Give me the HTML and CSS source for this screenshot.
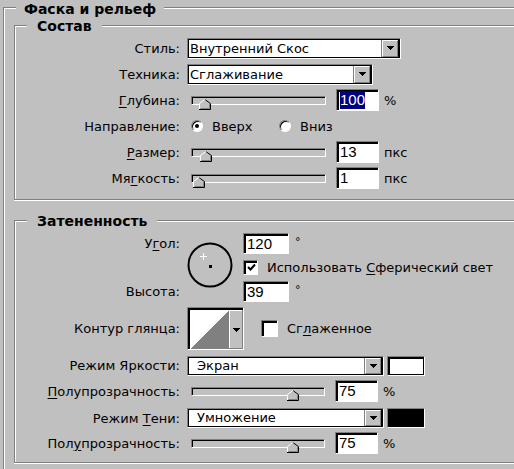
FILE: index.html
```html
<!DOCTYPE html>
<html lang="ru">
<head>
<meta charset="utf-8">
<title>Фаска и рельеф</title>
<link rel="stylesheet" href="styles.css">
</head>
<body>
<div class="outer">
  <div class="legend legend-outer">Фаска и рельеф</div>

  <div class="group group-sostav">
    <div class="legend">Состав</div>
    <div class="grid grid-sostav">
      <div class="lbl">Стиль:</div>
      <div class="ctl">
        <div class="combo w-style"><div class="combo-in"><span class="combo-text">Внутренний Скос</span><span class="combo-btn"><svg width="7" height="4" viewBox="0 0 7 4"><path d="M0 0h7v1h-1v1h-1v1h-1v1h-1v-1h-1v-1h-1v-1h-1z" fill="#000"/></svg></span></div></div>
      </div>

      <div class="lbl">Техника:</div>
      <div class="ctl">
        <div class="combo w-tech"><div class="combo-in"><span class="combo-text">Сглаживание</span><span class="combo-btn"><svg width="7" height="4" viewBox="0 0 7 4"><path d="M0 0h7v1h-1v1h-1v1h-1v1h-1v-1h-1v-1h-1v-1h-1z" fill="#000"/></svg></span></div></div>
      </div>

      <div class="lbl"><u>Г</u>лубина:</div>
      <div class="ctl">
        <div class="slider"><svg class="thumb" style="left:7px" width="12" height="11" viewBox="0 0 12 11"><path d="M0.5 10.5V4.5L6 0.5L11.5 4.5V10.5Z" fill="#c0c0c0"/><path d="M0.5 10V4.5L5.5 0.8" stroke="#fff" fill="none"/><path d="M6.3 0.8L11.5 4.6V10.5H0" stroke="#000" fill="none"/><path d="M10.5 5.2V9.5H1.5" stroke="#808080" fill="none"/></svg></div>
        <div class="edit"><span class="sel">100</span></div>
        <span class="unit">%</span>
      </div>

      <div class="lbl">Направление:</div>
      <div class="ctl">
        <div class="radio-item first"><span class="radio on"></span><span>Вверх</span></div>
        <div class="radio-item"><span class="radio"></span><span>Вниз</span></div>
      </div>

      <div class="lbl"><u>Р</u>азмер:</div>
      <div class="ctl">
        <div class="slider"><svg class="thumb" style="left:8px" width="12" height="11" viewBox="0 0 12 11"><path d="M0.5 10.5V4.5L6 0.5L11.5 4.5V10.5Z" fill="#c0c0c0"/><path d="M0.5 10V4.5L5.5 0.8" stroke="#fff" fill="none"/><path d="M6.3 0.8L11.5 4.6V10.5H0" stroke="#000" fill="none"/><path d="M10.5 5.2V9.5H1.5" stroke="#808080" fill="none"/></svg></div>
        <div class="edit">13</div>
        <span class="unit">пкс</span>
      </div>

      <div class="lbl">Мя<u>г</u>кость:</div>
      <div class="ctl">
        <div class="slider"><svg class="thumb" style="left:1px" width="12" height="11" viewBox="0 0 12 11"><path d="M0.5 10.5V4.5L6 0.5L11.5 4.5V10.5Z" fill="#c0c0c0"/><path d="M0.5 10V4.5L5.5 0.8" stroke="#fff" fill="none"/><path d="M6.3 0.8L11.5 4.6V10.5H0" stroke="#000" fill="none"/><path d="M10.5 5.2V9.5H1.5" stroke="#808080" fill="none"/></svg></div>
        <div class="edit">1</div>
        <span class="unit">пкс</span>
      </div>
    </div>
  </div>

  <div class="group group-shade">
    <div class="legend">Затененность</div>
    <div class="grid grid-shade">
      <div class="lbl r1">У<u>г</u>ол:</div>
      <div class="dial">
        <svg width="46" height="46" viewBox="0 0 46 46" shape-rendering="crispEdges">
          <circle cx="23" cy="23" r="21.5" stroke="#000" stroke-width="2" fill="none" shape-rendering="geometricPrecision"/>
          <path d="M13 14.5h7M16.5 11v7" stroke="#fff"/>
          <rect x="22" y="23" width="3" height="3" fill="#000"/>
        </svg>
      </div>
      <div class="ctl c3 r1">
        <div class="edit w-ang">120</div>
        <span class="deg">°</span>
      </div>

      <div class="ctl c3 r2">
        <span class="check"><svg width="9" height="9" viewBox="0 0 9 9"><path d="M1 4l2.5 2.5L8 1.5" stroke="#000" stroke-width="2" fill="none"/></svg></span>
        <span class="check-text">Использовать <u>С</u>ферический свет</span>
      </div>

      <div class="lbl r3">Высота:</div>
      <div class="ctl c3 r3">
        <div class="edit w-ang">39</div>
        <span class="deg">°</span>
      </div>

      <div class="lbl r4">Контур глянца:</div>
      <div class="ctl span2 r4">
        <div class="contour">
          <svg width="53" height="39" viewBox="0 0 53 39" shape-rendering="crispEdges">
            <rect x="0" y="0" width="39" height="39" fill="#fff"/>
            <polygon points="0,39 39,0 39,39" fill="#808080"/>
            <rect x="39" y="0" width="14" height="39" fill="#c0c0c0"/>
            <path d="M39.5 0v39M39 0.5h14" stroke="#fff"/>
            <path d="M52.5 0v39M39 38.5h14" stroke="#808080"/>
            <path d="M43 18h7v1h-1v1h-1v1h-1v1h-1v-1h-1v-1h-1v-1h-1z" fill="#000"/>
          </svg>
        </div>
        <span class="check big"></span>
        <span class="check-text">Сг<u>л</u>аженное</span>
      </div>

      <div class="lbl r5">Режим Яркости:</div>
      <div class="ctl span2 r5">
        <div class="combo w-mode"><div class="combo-in"><span class="combo-text pad">Экран</span><span class="combo-btn"><svg width="7" height="4" viewBox="0 0 7 4"><path d="M0 0h7v1h-1v1h-1v1h-1v1h-1v-1h-1v-1h-1v-1h-1z" fill="#000"/></svg></span></div></div>
        <div class="swatch"><div class="swatch-in white"></div></div>
      </div>

      <div class="lbl r6"><u>П</u>олупрозрачность:</div>
      <div class="ctl span2 r6">
        <div class="slider short"><svg class="thumb" style="left:95px" width="12" height="11" viewBox="0 0 12 11"><path d="M0.5 10.5V4.5L6 0.5L11.5 4.5V10.5Z" fill="#c0c0c0"/><path d="M0.5 10V4.5L5.5 0.8" stroke="#fff" fill="none"/><path d="M6.3 0.8L11.5 4.6V10.5H0" stroke="#000" fill="none"/><path d="M10.5 5.2V9.5H1.5" stroke="#808080" fill="none"/></svg></div>
        <div class="edit">75</div>
        <span class="unit">%</span>
      </div>

      <div class="lbl r7">Режим <u>Т</u>ени:</div>
      <div class="ctl span2 r7">
        <div class="combo w-mode"><div class="combo-in"><span class="combo-text pad">Умножение</span><span class="combo-btn"><svg width="7" height="4" viewBox="0 0 7 4"><path d="M0 0h7v1h-1v1h-1v1h-1v1h-1v-1h-1v-1h-1v-1h-1z" fill="#000"/></svg></span></div></div>
        <div class="swatch"><div class="swatch-in black"></div></div>
      </div>

      <div class="lbl r8">Пол<u>у</u>прозрачность:</div>
      <div class="ctl span2 r8">
        <div class="slider short"><svg class="thumb" style="left:95px" width="12" height="11" viewBox="0 0 12 11"><path d="M0.5 10.5V4.5L6 0.5L11.5 4.5V10.5Z" fill="#c0c0c0"/><path d="M0.5 10V4.5L5.5 0.8" stroke="#fff" fill="none"/><path d="M6.3 0.8L11.5 4.6V10.5H0" stroke="#000" fill="none"/><path d="M10.5 5.2V9.5H1.5" stroke="#808080" fill="none"/></svg></div>
        <div class="edit">75</div>
        <span class="unit">%</span>
      </div>
    </div>
  </div>
</div>
</body>
</html>
```

FILE: styles.css
```css
* { box-sizing: border-box; }
html, body { margin: 0; }
body {
  width: 514px;
  height: 469px;
  overflow: hidden;
  background: #c0c0c0;
  font-family: "DejaVu Sans", "Liberation Sans", sans-serif;
  font-size: 13px;
  color: #000;
}
u { text-decoration-thickness: 1px; text-underline-offset: 2px; }

.outer {
  margin: 7px 0 0 3px;
  width: 511px;
  height: 462px;
  border-top: 1px solid #808080;
  border-left: 1px solid #808080;
  box-shadow: inset 1px 1px 0 #fff;
  padding-left: 10px;
}

.legend {
  width: max-content;
  background: #c0c0c0;
  font-weight: bold;
  font-size: 14px;
  line-height: 16px;
  height: 16px;
  padding: 0 10px;
  margin: -8px 0 0 12px;
}
.legend-outer { margin: -7px 0 0 2px; padding: 0 8px; }

.group {
  border: 1px solid #808080;
  border-right: none;
  box-shadow: inset 1px 1px 0 #fff, 0 1px 0 #fff;
}
.group-sostav { margin-top: 8px; padding-bottom: 8px; }
.group-shade { margin-top: 20px; padding-bottom: 8px; }

.grid { display: grid; align-items: center; column-gap: 6px; }
.grid-sostav {
  grid-template-columns: 166px 1fr;
  grid-auto-rows: 26px;
  margin-top: 1px;
}
.grid-shade {
  grid-template-columns: 166px 50px 1fr;
  grid-template-rows: 24px 24px 24px 50px 25px 26px 28px 22px;
  margin-top: 2px;
}

.lbl {
  grid-column: 1;
  text-align: right;
  white-space: nowrap;
  padding-right: 1px;
}
.r1 { grid-row: 1; }
.r2 { grid-row: 2; }
.r3 { grid-row: 3; }
.r4 { grid-row: 4; }
.r5 { grid-row: 5; }
.r6 { grid-row: 6; }
.r7 { grid-row: 7; }
.r8 { grid-row: 8; }
.c3 { grid-column: 3; }
.span2 { grid-column: 2 / -1; }

.ctl { display: flex; align-items: center; white-space: nowrap; }

/* combo box */
.combo {
  height: 21px;
  border: 1px solid;
  border-color: #808080 #fff #fff #808080;
}
.combo-in {
  height: 100%;
  display: flex;
  border: 1px solid #000;
  border-width: 1px 2px 1px 1px;
  background: #fff;
}
.combo-text { flex: 1; padding-left: 1px; line-height: 17px; }
.combo-text.pad { padding-left: 8px; line-height: 16px; }
.combo-btn {
  width: 16px;
  background: #c0c0c0;
  border: 1px solid;
  border-color: #fff #808080 #808080 #fff;
  box-shadow: -1px 0 0 #808080;
  display: flex;
  align-items: center;
  justify-content: center;
}
.w-style { width: 214px; }
.w-tech { width: 186px; }
.w-mode { width: 197px; height: 20px; }

/* slider */
.slider {
  position: relative;
  width: 135px;
  height: 9px;
  margin-left: 4px;
  border: 1px solid;
  border-color: #808080 #fff #fff #808080;
  box-shadow: inset 1px 1px 0 #000;
  background: #c0c0c0;
}
.slider.short { width: 134px; }
.thumb { position: absolute; top: 2px; display: block; }

/* edit */
.edit {
  width: 43px;
  height: 22px;
  margin-left: 10px;
  padding-left: 3px;
  border: 1px solid;
  border-color: #808080 #fff #fff #808080;
  box-shadow: inset 1px 1px 0 #000, inset 2px 2px 0 #000;
  background: #fff;
  font-family: "Liberation Sans", sans-serif;
  font-size: 15px;
  line-height: 19px;
}
.edit.w-ang { width: 46px; margin-left: 0; height: 21px; }
.sel { background: #000080; color: #fff; display: inline-block; line-height: 18px; }
.unit { margin-left: 5px; }
.deg { align-self: flex-start; margin: 3px 0 0 6px; font-size: 11px; line-height: 11px; }

/* radio */
.radio-item { display: flex; align-items: center; gap: 9px; }
.radio-item.first { width: 88px; margin-left: 4px; }
.radio {
  position: relative;
  width: 12px;
  height: 12px;
  border-radius: 50%;
  background: #fff;
  border: 1px solid;
  border-color: #808080 #fff #fff #808080;
  box-shadow: inset 1px 1px 0 #000;
}
.radio.on::after {
  content: "";
  position: absolute;
  left: 3px;
  top: 3px;
  width: 4px;
  height: 4px;
  border-radius: 50%;
  background: #000;
}

/* dial */
.dial { grid-column: 2; grid-row: 1 / 4; align-self: start; margin-top: 11px; }
.dial svg { display: block; }

/* checkbox */
.check {
  width: 15px;
  height: 15px;
  background: #fff;
  border: 1px solid;
  border-color: #808080 #fff #fff #808080;
  box-shadow: inset 1px 1px 0 #000, inset 2px 2px 0 #000;
  display: flex;
  align-items: center;
  justify-content: center;
  padding: 1px 0 0 1px;
}
.check.big { width: 17px; height: 17px; margin-left: 17px; }
.check-text { margin-left: 9px; }

/* contour */
.contour {
  width: 57px;
  height: 43px;
  border: 1px solid;
  border-color: #808080 #fff #fff #808080;
  background: #000;
  padding: 2px 1px 1px 2px;
}
.contour svg { display: block; }

/* swatch */
.swatch {
  width: 38px;
  height: 20px;
  margin-left: 3px;
  border: 1px solid;
  border-color: #808080 #fff #fff #808080;
}
.swatch-in { height: 100%; border: 1px solid #000; border-width: 2px 1px 1px 2px; }
.swatch-in.white { background: #fff; }
.swatch-in.black { background: #000; }
```
